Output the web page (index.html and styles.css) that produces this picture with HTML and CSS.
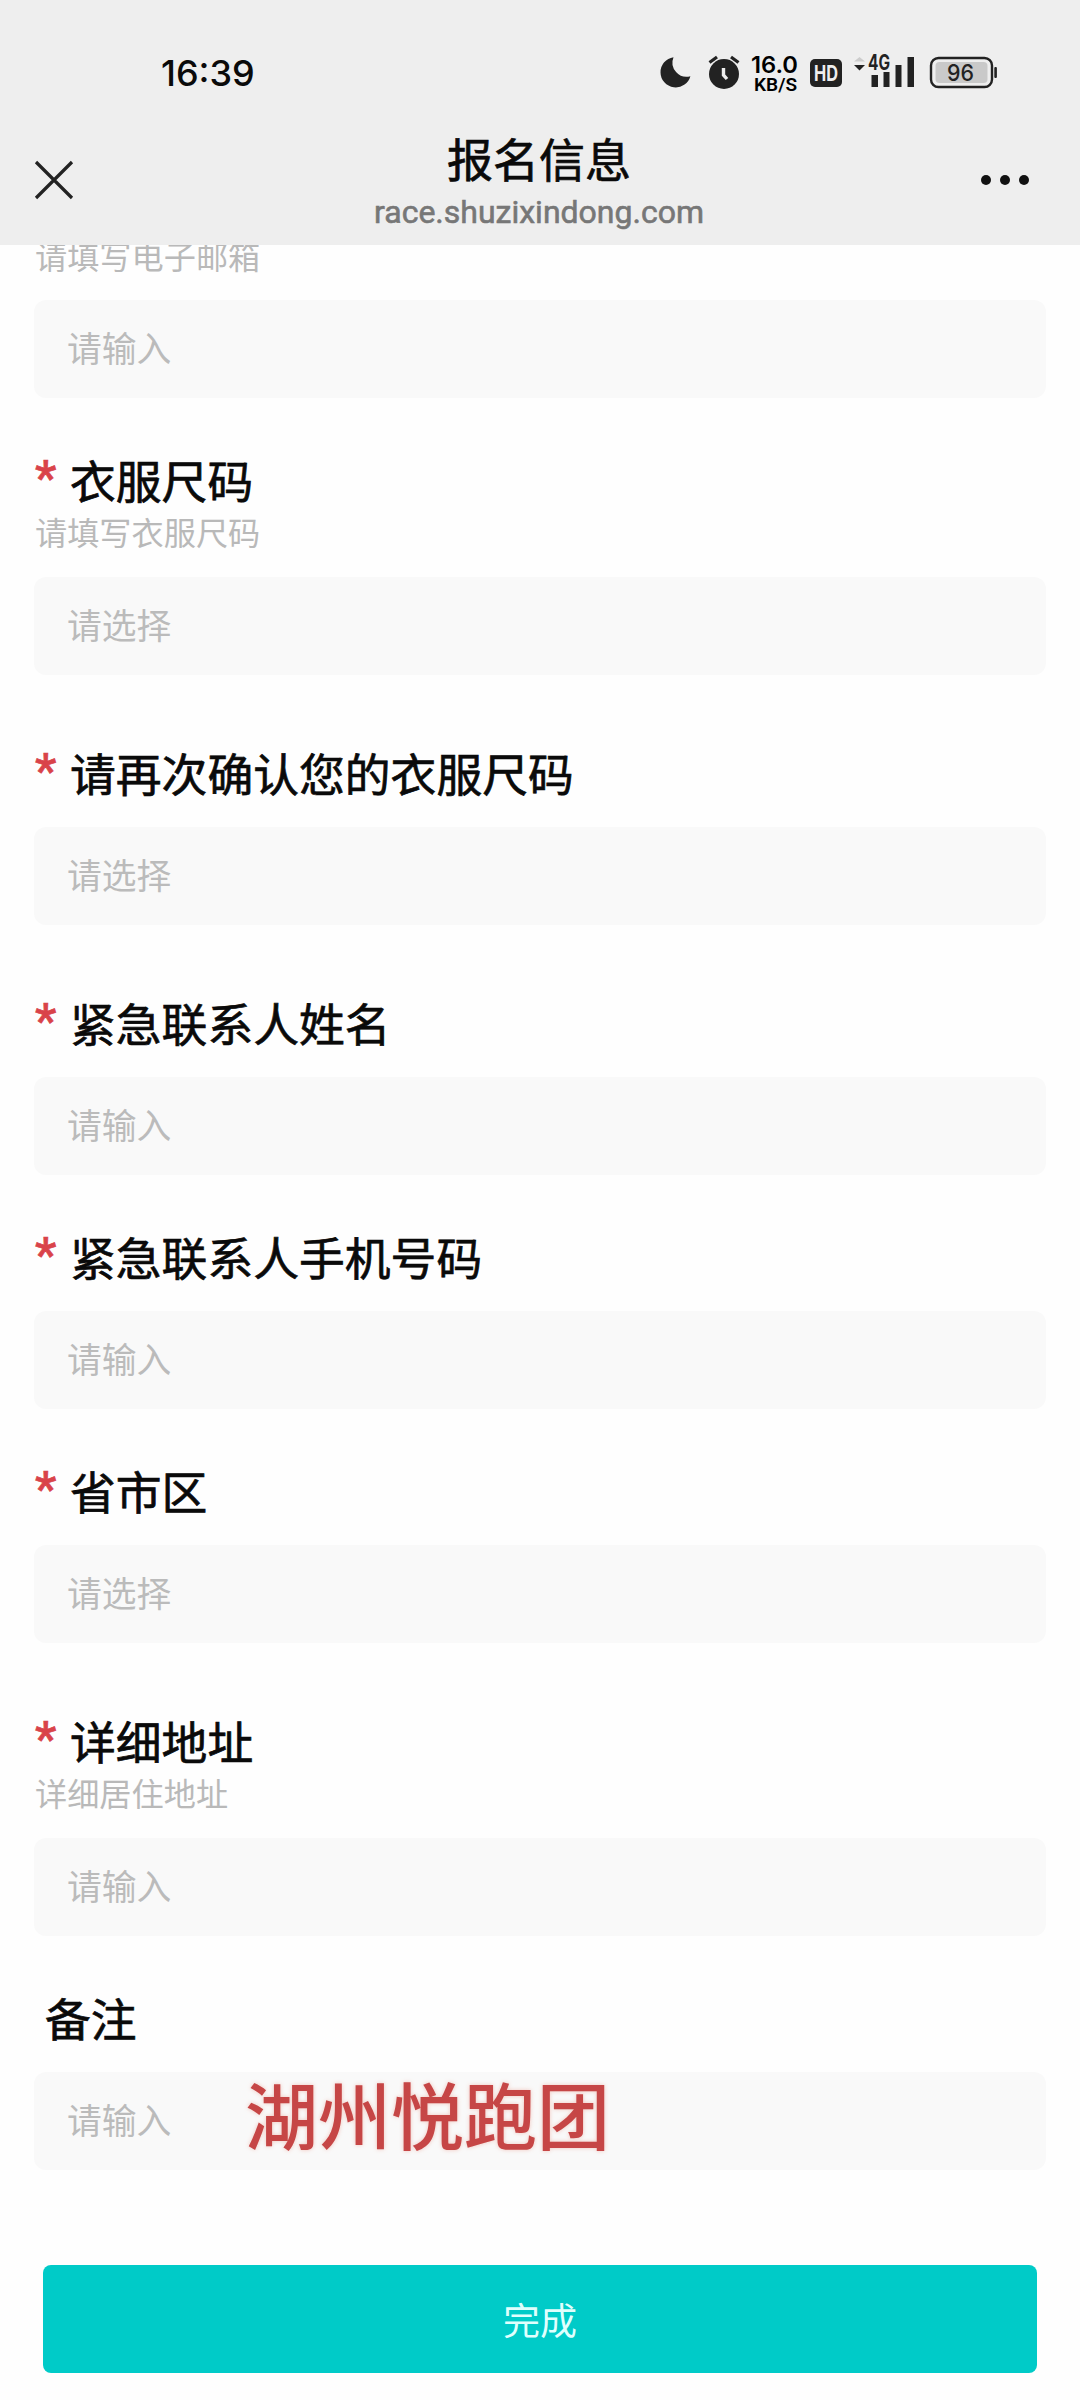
FILE: index.html
```html
<!DOCTYPE html>
<html lang="zh-CN">
<head>
    <meta charset="UTF-8">
    <meta name="viewport" content="width=device-width, initial-scale=1.0">
    <title>报名信息</title>
    <link rel="stylesheet" href="styles.css">
</head>
<body>
    <header class="header">
        <div class="status-bar">
            <span class="time">16:39</span>
            <svg class="status-icons" width="340" height="72" viewBox="660 38 340 72">
                <!-- moon -->
                <path d="M673.5 57.2A15.2 15.2 0 1 0 690.4 76.2A14.2 14.2 0 0 1 673.5 57.2Z" fill="#222"/>
                <!-- alarm -->
                <circle cx="724" cy="74" r="15" fill="#222"/>
                <path d="M709.5 62.5L717 57M738.5 62.5L731 57" stroke="#222" stroke-width="3.2" fill="none"/>
                <path d="M723.5 68V75L727 79" stroke="#eee" stroke-width="3.4" fill="none"/>
                <!-- network speed -->
                <text x="751" y="73" class="speed" textLength="47" lengthAdjust="spacingAndGlyphs">16.0</text>
                <text x="754" y="91" class="unit" textLength="43" lengthAdjust="spacingAndGlyphs">KB/S</text>
                <!-- hd -->
                <rect x="810" y="59" width="32" height="28" rx="5" fill="#222"/>
                <text x="814" y="81" class="hd" textLength="24" lengthAdjust="spacingAndGlyphs">HD</text>
                <!-- signal -->
                <path d="M854 61.5L859.5 57L865 61.5Z" fill="#ccc"/>
                <path d="M854 65H865L859.5 70.5Z" fill="#222"/>
                <text x="868" y="70" class="net" textLength="22" lengthAdjust="spacingAndGlyphs">4G</text>
                <path d="M871.5 75h6.5v12h-6.5zM883.5 72h6v15h-6zM895.5 65h6v22h-6zM907.5 57h6.5v30h-6.5z" fill="#222"/>
                <!-- battery -->
                <rect x="931" y="58" width="61" height="29" rx="7.5" fill="none" stroke="#222" stroke-width="2.4"/>
                <rect x="935.5" y="62" width="52" height="21" rx="4" fill="#c9c9c9"/>
                <rect x="994.3" y="67" width="2.6" height="11" rx="1" fill="#222"/>
                <text x="947" y="81" class="level" textLength="27" lengthAdjust="spacingAndGlyphs">96</text>
            </svg>
        </div>
        <div class="nav-bar">
            <svg class="close" width="40" height="40" viewBox="0 0 40 40">
                <path d="M2 2L38 38M38 2L2 38" stroke="#222" stroke-width="3.2"/>
            </svg>
            <div class="titles">
                <h1>报名信息</h1>
                <p>race.shuzixindong.com</p>
            </div>
            <svg class="more" width="50" height="12" viewBox="0 0 50 12" fill="#111">
                <circle cx="6" cy="6" r="5"/>
                <circle cx="25" cy="6" r="5"/>
                <circle cx="44" cy="6" r="5"/>
            </svg>
        </div>
    </header>

    <main class="form">
        <div class="field">
            <p class="hint">请填写电子邮箱</p>
            <div class="input">请输入</div>
        </div>
        <div class="field select">
            <h2 class="label required">衣服尺码</h2>
            <p class="hint">请填写衣服尺码</p>
            <div class="input">请选择</div>
        </div>
        <div class="field select">
            <h2 class="label required">请再次确认您的衣服尺码</h2>
            <div class="input">请选择</div>
        </div>
        <div class="field">
            <h2 class="label required">紧急联系人姓名</h2>
            <div class="input">请输入</div>
        </div>
        <div class="field">
            <h2 class="label required">紧急联系人手机号码</h2>
            <div class="input">请输入</div>
        </div>
        <div class="field select">
            <h2 class="label required">省市区</h2>
            <div class="input">请选择</div>
        </div>
        <div class="field">
            <h2 class="label required">详细地址</h2>
            <p class="hint">详细居住地址</p>
            <div class="input">请输入</div>
        </div>
        <div class="field">
            <h2 class="label">备注</h2>
            <div class="input">请输入<span class="note">湖州悦跑团</span></div>
        </div>
        <button class="submit">完成</button>
    </main>
</body>
</html>
```

FILE: styles.css
```css
* {
    margin: 0;
    padding: 0;
    box-sizing: border-box;
}

body {
    width: 1080px;
    height: 2400px;
    overflow: hidden;
    background: #fefefe;
    font-family: "Noto Sans CJK SC", sans-serif;
    color: #0a0a0a;
}

/* Header */
.header {
    position: relative;
    z-index: 1;
    height: 245px;
    background: #eee;
}

.status-bar {
    display: flex;
    justify-content: space-between;
    align-items: center;
    height: 110px;
    padding: 38px 80px 0 161px;
}

.time {
    margin-top: -2px;
    font-family: Inter, sans-serif;
    font-size: 36px;
    font-weight: 500;
}

.status-icons {
    font-family: Inter, sans-serif;
}

.speed {
    font-size: 23px;
    font-weight: 600;
}

.unit {
    font-family: Roboto, sans-serif;
    font-size: 18px;
    font-weight: 600;
}

.hd {
    font-size: 22px;
    font-weight: 700;
    fill: #eee;
}

.net {
    font-size: 21px;
    font-weight: 700;
    fill: #222;
}

.level {
    font-size: 23px;
    font-weight: 500;
    fill: #222;
}

.nav-bar {
    display: flex;
    justify-content: space-between;
    height: 135px;
    padding: 0 50px 0 34px;
}

.close {
    margin-top: 50px;
}

.titles {
    margin-left: 24px;
    text-align: center;
}

.titles h1 {
    margin-top: 17px;
    font-size: 46px;
    font-weight: 400;
    line-height: 60px;
    -webkit-text-stroke: 0.7px currentColor;
}

.titles p {
    margin-top: 6px;
    font-family: Roboto, sans-serif;
    font-size: 32px;
    line-height: 38px;
    color: #777;
    -webkit-text-stroke: 0.6px currentColor;
}

.more {
    margin-top: 64px;
}

/* Form */
.form {
    padding: 0 34px;
    margin-top: -10px;
}

.field {
    margin-bottom: 58px;
}

.field.select {
    margin-bottom: 74px;
}

.label {
    display: flex;
    height: 50px;
    padding-left: 11px;
    font-size: 45.8px;
    font-weight: 400;
    line-height: 46px;
    white-space: nowrap;
    -webkit-text-stroke: 0.7px currentColor;
}

.label.required {
    padding-left: 0;
}

.label.required::before {
    content: '*';
    width: 35px;
    padding-left: 1px;
    font-family: Roboto, sans-serif;
    font-size: 48px;
    font-weight: 500;
    line-height: 43px;
    color: #d9434a;
}

.hint {
    margin-top: 5px;
    padding-left: 1px;
    font-size: 32.2px;
    font-weight: 400;
    line-height: 41px;
    color: #b9b9b9;
}

.input {
    position: relative;
    height: 98px;
    margin-top: 28px;
    padding-left: 33px;
    border-radius: 12px;
    background: #f9f9f9;
    font-size: 34.8px;
    font-weight: 400;
    line-height: 95px;
    color: #bbb;
}

.hint + .input {
    margin-top: 25px;
}

.form > .field:first-child .hint {
    margin-top: 0;
}

.form > .field:first-child .input {
    margin-top: 24px;
}

.note {
    position: absolute;
    left: 211px;
    top: 0;
    font-size: 73px;
    font-weight: 500;
    line-height: 81px;
    color: #c64646;
    text-shadow: 0 0 4px rgba(230, 120, 100, 0.4);
}

.submit {
    display: block;
    width: 994px;
    height: 108px;
    margin: 95px 0 0 9px;
    border: none;
    border-radius: 8px;
    background: #00cbc8;
    font-family: inherit;
    font-size: 37px;
    font-weight: 400;
    color: #dffffd;
}
```
